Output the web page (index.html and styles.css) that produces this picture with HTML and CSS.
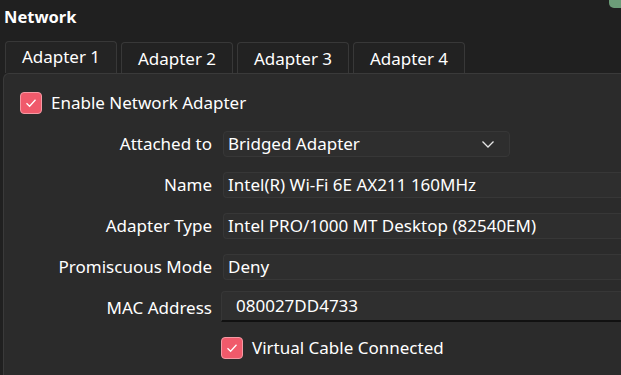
FILE: index.html
```html
<!DOCTYPE html>
<html lang="en">
<head>
    <meta charset="UTF-8">
    <title>Network</title>
    <link rel="stylesheet" href="styles.css">
</head>
<body>
    <div class="corner"></div>
    <h2 class="title">Network</h2>

    <div class="tabs">
        <div class="tab active">Adapter 1</div>
        <div class="tab">Adapter 2</div>
        <div class="tab">Adapter 3</div>
        <div class="tab">Adapter 4</div>
    </div>

    <div class="panel">
        <label class="check enable">
            <span class="box">
                <svg width="14" height="14" viewBox="0 0 14 14"><path d="M2.5 7.2 L5.6 10.2 L11.5 3.8" fill="none" stroke="#fff" stroke-width="1.3"/></svg>
            </span>
            Enable Network Adapter
        </label>

        <div class="form">
            <div class="label">Attached to</div>
            <div class="field select">
                <span>Bridged Adapter</span>
                <svg width="14" height="10" viewBox="0 0 14 10"><path d="M1.5 2.5 L7 8 L12.5 2.5" fill="none" stroke="#e6e6e6" stroke-width="1.3"/></svg>
            </div>

            <div class="label">Name</div>
            <div class="field wide">Intel(R) Wi-Fi 6E AX211 160MHz</div>

            <div class="label">Adapter Type</div>
            <div class="field wide">Intel PRO/1000 MT Desktop (82540EM)</div>

            <div class="label">Promiscuous Mode</div>
            <div class="field wide">Deny</div>

            <div class="label">MAC Address</div>
            <div class="field mac">080027DD4733</div>

            <div></div>
            <label class="check">
                <span class="box">
                    <svg width="14" height="14" viewBox="0 0 14 14"><path d="M2.5 7.2 L5.6 10.2 L11.5 3.8" fill="none" stroke="#fff" stroke-width="1.3"/></svg>
                </span>
                Virtual Cable Connected
            </label>
        </div>
    </div>
</body>
</html>
```

FILE: styles.css
```css
* {
    margin: 0;
    padding: 0;
    box-sizing: border-box;
}

body {
    background: #202020;
    color: #ffffff;
    font-family: 'Noto Sans', sans-serif;
    font-size: 17px;
    overflow: hidden;
    height: 375px;
}

.corner {
    position: absolute;
    top: -6px;
    right: -6px;
    width: 18px;
    height: 14px;
    background: #6c9c78;
    border-radius: 5px;
}

.title {
    font-size: 16.5px;
    font-weight: bold;
    padding: 5px 0 0 4px;
    height: 41px;
}

.tabs {
    display: flex;
    gap: 4px;
    padding-left: 5px;
    height: 32px;
    align-items: flex-end;
}

.tab {
    width: 112px;
    height: 31px;
    border: 1px solid #383838;
    border-bottom: none;
    border-radius: 4px 4px 0 0;
    background: #222222;
    text-align: center;
    line-height: 31px;
}

.tab.active {
    height: 32px;
    line-height: 29px;
    background: #242424;
}

.panel {
    margin-left: 3px;
    height: 302px;
    background: #2b2b2b;
    border-top: 1px solid #3a3a3a;
    border-left: 1px solid #3a3a3a;
    border-radius: 6px 0 0 0;
    padding: 18px 0 0 16px;
}

.check {
    display: flex;
    align-items: center;
    gap: 9px;
    line-height: 22px;
}

.box {
    width: 22px;
    height: 22px;
    border-radius: 4px;
    background: #f05a6b;
    border: 1px solid #f49aa4;
    display: flex;
    align-items: center;
    justify-content: center;
}

.form {
    display: grid;
    grid-template-columns: 192px 1fr;
    grid-auto-rows: 26px;
    column-gap: 11px;
    row-gap: 15px;
    margin-top: 17px;
    align-items: center;
}

.label {
    text-align: right;
    line-height: 26px;
}

.field {
    height: 26px;
    background: #2e2e2e;
    border: 1px solid #373737;
    border-radius: 4px 0 0 4px;
    border-right: none;
    padding-left: 4px;
    line-height: 24px;
    white-space: nowrap;
}

.select {
    width: 287px;
    border-right: 1px solid #373737;
    border-radius: 4px;
    display: flex;
    justify-content: space-between;
    align-items: center;
    padding-right: 14px;
}

.wide {
    margin-right: -8px;
}

.mac {
    height: 31px;
    margin-left: -2px;
    margin-top: -3px;
    padding-left: 14px;
    line-height: 28px;
    border-bottom: 2px solid #111111;
    border-radius: 4px 0 0 0;
    background: #2f2f2f;
}

.form .check {
    margin-left: -2px;
    margin-top: -2px;
}
```
